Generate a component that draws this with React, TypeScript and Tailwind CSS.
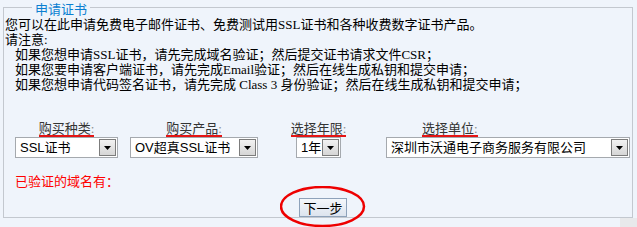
const cjk = "font-['Liberation_Serif','Noto_Sans_CJK_SC',serif]";

function FakeSelect({ value, width }: { value: string; width: string }) {
  return (
    <div
      className={`${width} h-[21px] flex items-stretch bg-white border border-[#a5a9ae] font-['Liberation_Sans','Noto_Sans_CJK_SC',sans-serif] text-[13px] text-black`}
    >
      <span className="flex-1 pl-[4px] leading-[19px] whitespace-nowrap overflow-hidden">{value}</span>
      <span className="w-[17px] my-[1px] mr-[1px] flex items-center justify-center border border-[#7c7c7c] bg-gradient-to-b from-[#f2f2f2] to-[#d6d6d6]">
        <svg width="7" height="4" viewBox="0 0 7 4">
          <path d="M0 0h7L3.5 4z" fill="#000" />
        </svg>
      </span>
    </div>
  );
}

function Label({ text, className = "" }: { text: string; className?: string }) {
  return (
    <span className={`inline-block whitespace-nowrap text-[13px] leading-[13px] text-[#333] border-b-2 border-[#e41414] ${className}`}>
      {text}
      <span className="text-[#8a8a8a]">:</span>
    </span>
  );
}

export default function App() {
  const options = [
    { label: "购买种类", value: "SSL证书", w: "w-[103px]", gap: "ml-0", lab: "self-center" },
    { label: "购买产品", value: "OV超真SSL证书", w: "w-[128px]", gap: "ml-[12px]", lab: "self-center" },
    { label: "选择年限", value: "1年", w: "w-[45px]", gap: "ml-[38px]", lab: "self-center" },
    { label: "选择单位", value: "深圳市沃通电子商务服务有限公司", w: "w-[244px]", gap: "ml-[45px]", lab: "self-start ml-[36px]" },
  ];

  return (
    <div className={`relative w-[637px] h-[227px] overflow-hidden bg-[#eff4fb] pt-[7px] ${cjk}`}>
      <div className="relative ml-[3px] w-[630px] h-[211px] border border-[#c3c8cf] pt-[9px]">
        <span className="absolute left-[28px] top-[-7px] px-[3px] bg-[#eff4fb] text-[13px] leading-[15px] text-[#0b7fd1] font-['Noto_Sans_CJK_SC',sans-serif]">
          申请证书
        </span>

        <div className="pl-[1px] text-[13px] leading-[15px] text-black">
          <div>您可以在此申请免费电子邮件证书、免费测试用SSL证书和各种收费数字证书产品。</div>
          <div>请注意:</div>
          <div className="ml-[10px]">如果您想申请SSL证书，请先完成域名验证；然后提交证书请求文件CSR；</div>
          <div className="ml-[10px]">如果您要申请客户端证书，请先完成Email验证；然后在线生成私钥和提交申请；</div>
          <div className="ml-[10px]">如果您想申请代码签名证书，请先完成 Class 3 身份验证；然后在线生成私钥和提交申请；</div>
        </div>

        <div className="flex mt-[30px] ml-[11px]">
          {options.map((o) => (
            <div key={o.label} className={`flex flex-col shrink-0 ${o.w} ${o.gap}`}>
              <Label text={o.label} className={o.lab} />
              <FakeSelect value={o.value} width={o.w} />
            </div>
          ))}
        </div>

        <div className="mt-[16px] ml-[11px] text-[13px] leading-[15px] text-[#ff0000]">已验证的域名有：</div>

        <div className="mt-[9px] flex">
          <button className="ml-[295px] w-[48px] h-[19px] border border-[#8ea2ba] bg-gradient-to-b from-[#f4f7fb] to-[#dde4ee] text-[13px] leading-[17px] text-black font-['Noto_Sans_CJK_SC',sans-serif]">
            下一步
          </button>
        </div>
      </div>

      <div className="flex justify-end">
        <div className="w-[17px] h-[9px] bg-[#e8e9eb]" />
      </div>

      <svg className="absolute left-[280px] top-[186px]" width="86" height="42" viewBox="0 0 86 42">
        <ellipse cx="42.5" cy="20.5" rx="41.5" ry="19.5" fill="none" stroke="#ee0000" strokeWidth="2.5" />
      </svg>
    </div>
  );
}
